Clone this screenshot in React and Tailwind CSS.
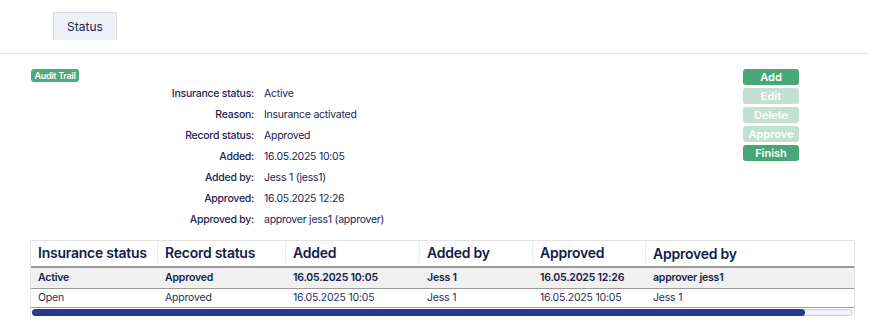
import React from "react";

const info = [
  ["Insurance status:", "Active"],
  ["Reason:", "Insurance activated"],
  ["Record status:", "Approved"],
  ["Added:", "16.05.2025 10:05"],
  ["Added by:", "Jess 1 (jess1)"],
  ["Approved:", "16.05.2025 12:26"],
  ["Approved by:", "approver jess1 (approver)"],
];

const columns = [
  { label: "Insurance status", w: "w-[127px]" },
  { label: "Record status", w: "w-[128px]" },
  { label: "Added", w: "w-[134px]" },
  { label: "Added by", w: "w-[113px]" },
  { label: "Approved", w: "w-[113px]" },
  { label: "Approved by", w: "flex-1" },
];

const rows = [
  {
    bold: true,
    cells: ["Active", "Approved", "16.05.2025 10:05", "Jess 1", "16.05.2025 12:26", "approver jess1"],
  },
  {
    bold: false,
    cells: ["Open", "Approved", "16.05.2025 10:05", "Jess 1", "16.05.2025 10:05", "Jess 1"],
  },
];

const buttons = [
  { label: "Add", enabled: true },
  { label: "Edit", enabled: false },
  { label: "Delete", enabled: false },
  { label: "Approve", enabled: false },
  { label: "Finish", enabled: true },
];

const App = () => {
  return (
    <div className="w-[869px] h-[323px] bg-white font-['Inter',sans-serif] text-[#1d2453] overflow-hidden">
      <div className="pl-[53px] pt-[12px]">
        <div className="w-[64px] h-[28px] bg-[#eef0f7] border border-b-0 border-[#dcdde3] flex items-center justify-center text-[12px]">
          Status
        </div>
      </div>
      <div className="mt-[13px] border-t border-[#e1e1e1]" />

      <div className="pl-[31px] pr-[70px] pt-[15px] flex">
        <div className="flex-1">
          <div className="w-[48px] h-[13px] rounded-[3px] bg-[#4caa7b] text-white text-[9px] font-semibold flex items-center justify-center tracking-[-0.3px]">
            Audit Trail
          </div>
          <div className="mt-[1px]">
            {info.map(([label, value]) => (
              <div key={label} className="flex h-[21px] items-center text-[10.5px] tracking-[-0.25px]">
                <div className="w-[223px] text-right font-medium">{label}</div>
                <div className="ml-[10px]">{value}</div>
              </div>
            ))}
          </div>
        </div>
        <div className="w-[56px] flex flex-col gap-[3px]">
          {buttons.map((b) => (
            <button
              key={b.label}
              className={`h-[16px] rounded-[3px] text-[11px] font-semibold text-white flex items-center justify-center ${
                b.enabled ? "bg-[#49a676]" : "bg-[#c2e1d2]"
              }`}
            >
              {b.label}
            </button>
          ))}
        </div>
      </div>

      <div className="ml-[30px] mt-[10px] w-[825px] border border-b-0 border-[#e3e3e3]">
        <div className="flex h-[27px] border-b-2 border-[#9a9a9a]">
          {columns.map((c, i) => (
            <div
              key={c.label}
              className={`${c.w} flex items-center pl-[7px] text-[14px] font-semibold tracking-[-0.25px] text-[#141c48] ${
                i < columns.length - 1 ? "border-r border-[#ececec] mb-[3px]" : ""
              }`}
            >
              {c.label}
            </div>
          ))}
        </div>
        {rows.map((r, ri) => (
          <div
            key={ri}
            className={`flex items-center border-b border-[#9a9a9a] text-[10.5px] tracking-[-0.2px] ${
              r.bold ? "h-[21px] bg-[#f0f0f0] font-semibold text-[#141c48]" : "h-[19px] text-[#2a3158]"
            }`}
          >
            {r.cells.map((cell, ci) => (
              <div key={ci} className={`${columns[ci].w} pl-[7px]`}>
                {cell}
              </div>
            ))}
          </div>
        ))}
        <div className="h-[9px] flex items-center px-[1px]">
          <div className="relative w-full h-[7px] rounded-full bg-[#eef1f8] border border-[#c8cfe2]">
            <div className="absolute -left-px -top-px h-[7px] w-[773px] rounded-full bg-[#27388a]" />
          </div>
        </div>
      </div>
    </div>
  );
};

export default App;
